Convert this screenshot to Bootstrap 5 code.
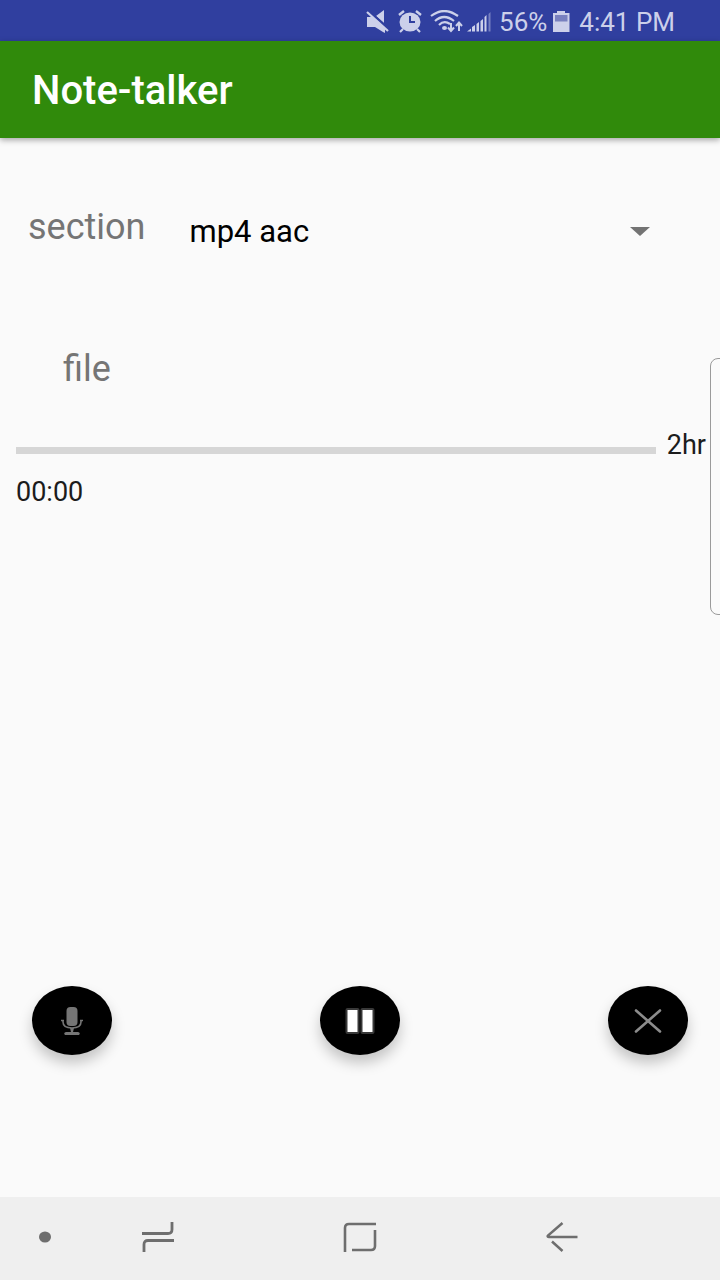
<!DOCTYPE html>
<html lang="en">
<head>
<meta charset="utf-8">
<meta name="viewport" content="width=device-width, initial-scale=1">
<title>Note-talker</title>
<link href="https://cdn.jsdelivr.net/npm/bootstrap@5.3.0/dist/css/bootstrap.min.css" rel="stylesheet">
<style>
  body { font-family: Roboto, "Noto Sans", sans-serif; background: #fafafa; color: #1c1c1c; overflow-x: hidden; }
  svg { display: block; flex: none; }
  .status-bar { background: #303f9f; color: #ccd0ea; height: 41px; padding-right: 45px; font-size: 26px; line-height: 32px; padding-top: 2px; }
  .app-bar { background: #308a0b; height: 97px; padding: 2px 32px 0; box-shadow: 0 2px 6px rgba(0,0,0,.35); }
  .app-bar h1 { font-size: 40px; line-height: 44px; font-weight: 500; color: #fff; }
  .field-label { font-size: 36px; line-height: 40px; color: #757575; }
  .section-row { padding: 69px 48px 0 28px; gap: 44px; }
  .format-select { font-size: 31px; line-height: 40px; color: #000; border: 0; padding: 5px 44px 4px 0; background-color: transparent; background-position: right 22px center; background-size: 20px 10px;
    background-image: url("data:image/svg+xml,%3csvg xmlns='http://www.w3.org/2000/svg' viewBox='0 0 20 10'%3e%3cpath fill='%23737373' d='M0 0h20L10 9z'/%3e%3c/svg%3e"); }
  .file-row { padding: 93px 63px 0; }
  .time-row { padding: 40px 14px 0 16px; gap: 11px; }
  .time-text { font-size: 27px; line-height: 32px; }
  .track { height: 7px; border-radius: 0; background: #d6d6d6; margin-top: 10px; }
  .elapsed { padding: 15px 16px 0; }
  .controls { padding: 0 32px 142px; }
  .round-btn { width: 80px; height: 69px; border-radius: 50%; background: #000; box-shadow: 0 8px 14px rgba(0,0,0,.22); }
  .round-btn:hover { background: #222; }
  .nav-keys { height: 83px; background: #efefef; display: grid; grid-template-columns: 8fr 28fr 28fr 28fr 8fr; color: #6e6e6e; }
  .nav-keys button { color: inherit; height: 80px; }
  .nav-keys .dot-key { padding: 0 7px 0 0; }
  .edge-handle { top: 358px; right: -8px; width: 18px; height: 257px; border: 1px solid #9a9a9a; border-radius: 8px; }
</style>
</head>
<body>
<div class="d-flex flex-column min-vh-100 position-relative overflow-hidden">
  <div class="status-bar d-flex justify-content-end align-items-center">
    <svg class="me-2" width="24" height="24" viewBox="0 0 24 24" fill="currentColor"><path d="M1 7h5l6 4 7 8v4l-2-1-8-5H1zM10 6l8-6v13z"/><path d="M3 1l20 18" stroke="#303f9f" stroke-width="2"/><path d="M1 2l21 19" stroke="currentColor" stroke-width="2.2"/></svg>
    <svg class="me-2" width="24" height="24" viewBox="0 0 24 24" fill="none" stroke="currentColor"><ellipse cx="12" cy="12" rx="10.500" ry="9.500" fill="currentColor" stroke="none"/><path d="M1 5l5-4M23 5l-5-4" stroke-width="2.400"/><path d="M5 19l-3 3M19 19l3 3" stroke-width="2.200"/><path d="M12 6v6h5" stroke="#303f9f" stroke-width="2"/></svg>
    <svg class="me-1" width="33" height="24" viewBox="0 0 33 24" fill="none" stroke="currentColor" stroke-width="2.200"><path d="M1 6Q14-4 28 6M5 11Q14 3 24 11M9 15Q14 10 20 14"/><ellipse cx="14.500" cy="18" rx="2.500" ry="2" fill="currentColor" stroke="none"/><path d="M21 13v8M18 17.500l3 3.500 3-3.500M29 21v-8M26 16l3-3.500 3 3.500" stroke-width="2"/></svg>
    <svg width="24" height="24" viewBox="0 0 24 24" fill="currentColor"><path d="M0 21.500l4-3v3zM5 17l3-2v6.500H5zM9.500 14l2.500-2v9.500H9.500zM13.500 11L16 9v12.500h-2.500zM17.500 7L19.500 5v16.500h-2z"/><path d="M21.500 4l2-2v19.500h-2z" opacity=".45"/></svg>
    <span class="ms-2">56%</span>
    <svg class="mx-1" width="24" height="24" viewBox="0 0 24 24" fill="currentColor"><path d="M2 3h4V1h8v2h4.500v19H2z"/><path d="M4 5h12.500v6.500H4z" fill="#7880bf"/></svg>
    <span>4:41 PM</span>
  </div>

  <header class="app-bar d-flex align-items-center"><h1 class="m-0">Note-talker</h1></header>

  <main class="flex-grow-1 d-flex flex-column">
    <div class="section-row d-flex align-items-start">
      <label class="field-label" for="format">section</label>
      <select class="form-select format-select shadow-none" id="format"><option>mp4 aac</option></select>
    </div>
    <div class="file-row field-label">file</div>
    <div class="time-row d-flex align-items-center">
      <div class="progress track flex-grow-1" role="progressbar" aria-label="Recording progress" aria-valuenow="0" aria-valuemin="0" aria-valuemax="100"></div>
      <span class="time-text">2hr</span>
    </div>
    <div class="elapsed time-text">00:00</div>

    <div class="controls d-flex justify-content-between mt-auto">
      <button class="btn round-btn border-0 p-0 d-flex align-items-center justify-content-center" type="button" aria-label="Record">
        <svg width="22" height="30" viewBox="0 0 22 30" fill="#757575"><rect x="5.500" y="1" width="11" height="19" rx="4"/><path d="M2 14v2q0 6 9 6t9-6v-2M0 14.500h3M19 14.500h3" fill="none" stroke="#757575" stroke-width="1.600"/><path d="M9 22h4l-1 4h5q3 1 1 3H4q-2-2 1-3h5z"/></svg>
      </button>
      <button class="btn round-btn border-0 p-0 d-flex align-items-center justify-content-center" type="button" aria-label="Pause">
        <svg width="30" height="26" viewBox="0 0 30 26" fill="#fff" stroke="#383838" stroke-width="2"><rect x="1.500" y="1" width="12" height="24" rx="1"/><rect x="16.500" y="1" width="12" height="24" rx="1"/></svg>
      </button>
      <button class="btn round-btn border-0 p-0 d-flex align-items-center justify-content-center" type="button" aria-label="Cancel">
        <svg width="28" height="24" viewBox="0 0 28 24" stroke="#8c8c8c" stroke-width="2.600" stroke-linecap="round"><path d="M2 1.500l24 21M26 1.500l-24 21"/></svg>
      </button>
    </div>
  </main>

  <nav class="nav-keys">
    <button class="btn border-0 dot-key d-flex align-items-center justify-content-end" type="button" aria-label="Hide bar"><svg width="12" height="12" viewBox="0 0 12 12" fill="currentColor"><ellipse cx="6" cy="6" rx="6" ry="5.500"/></svg></button>
    <button class="btn border-0 p-0 d-flex align-items-center justify-content-center" type="button" aria-label="Recents"><svg width="32" height="30" viewBox="0 0 32 30" fill="none" stroke="currentColor" stroke-width="2.800"><path d="M0 11.500h26q4 0 4-4V0M32 18.500H6q-4 0-4 4V30"/></svg></button>
    <button class="btn border-0 p-0 d-flex align-items-center justify-content-center" type="button" aria-label="Home"><svg width="34" height="30" viewBox="0 0 34 30" fill="none" stroke="currentColor" stroke-width="2.600"><path d="M2 30V6q0-4 4-4h27M32 8v16q0 4-4 4H9"/></svg></button>
    <button class="btn border-0 p-0 d-flex align-items-center justify-content-center" type="button" aria-label="Back"><svg width="32" height="30" viewBox="0 0 32 30" fill="none" stroke="currentColor" stroke-width="2.500"><path d="M16.500 1L2 13.500Q1 15 3 15h28.500M6 19.500l10.500 9.500"/></svg></button>
  </nav>
  <div class="edge-handle position-absolute"></div>
</div>
<script src="https://cdn.jsdelivr.net/npm/bootstrap@5.3.0/dist/js/bootstrap.bundle.min.js"></script>
</body>
</html>
